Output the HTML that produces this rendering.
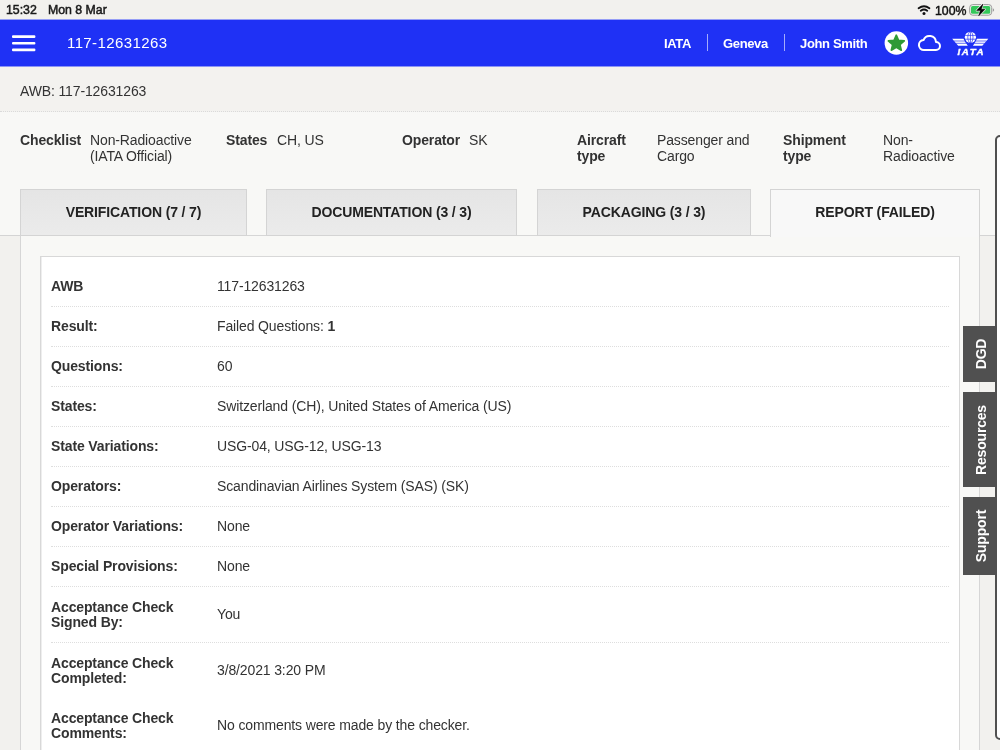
<!DOCTYPE html>
<html><head><meta charset="utf-8">
<style>
*{margin:0;padding:0;box-sizing:border-box}
html,body{width:1000px;height:750px;overflow:hidden;background:#f8f8f6;font-family:"Liberation Sans",sans-serif;color:#333}
.a{position:absolute;white-space:nowrap}
.g{filter:grayscale(1)}
#status{position:absolute;left:0;top:0;width:1000px;height:19px;background:#f2f1ee;color:#1a1a1a;font-size:12.3px;font-weight:normal;-webkit-text-stroke:0.5px #1a1a1a;letter-spacing:0}
#bar{position:absolute;left:0;top:19px;width:1000px;height:48px;background:linear-gradient(to bottom,rgba(31,49,245,.45) 0,rgba(31,49,245,.45) 1px,#1f31f5 1px,#1f31f5 47px,rgba(31,49,245,.5) 47px,rgba(31,49,245,.5) 48px);color:#fff}
.nav{top:17px;font-size:13px;font-weight:bold;letter-spacing:-0.35px}
.hb{position:absolute;left:12px;width:23.5px;height:2.6px;background:#fff;border-radius:1px}
#awbhead .a,#info .a{filter:grayscale(1)}
#awbhead{position:absolute;left:0;top:67px;width:1000px;height:45px;background:#f3f2ef;border-bottom:1px dotted #dadada;font-size:14px;color:#333;letter-spacing:-0.13px}
#info{position:absolute;left:0;top:112px;width:1000px;height:123px;background:#f8f8f6;font-size:14px;color:#333;line-height:16px;letter-spacing:-0.13px}
.lb{font-weight:bold}
.tab{position:absolute;top:189px;height:47px;background:linear-gradient(#e5e5e5,#ebebeb);border:1px solid #d4d4d4;font-size:14px;font-weight:bold;color:#222;text-align:center;line-height:45px;letter-spacing:-0.13px}
#outer{position:absolute;left:0;top:235px;width:1000px;height:515px;background:#f2f1ee;border-top:1px solid #d4d4d4}
#panel{position:absolute;left:20px;top:235px;width:960px;height:515px;background:#f8f8f6;border:1px solid #d6d6d6;border-bottom:none}
#card{position:absolute;left:40px;top:256px;width:920px;height:520px;background:#fff;border:1px solid #d8d8d8;box-shadow:inset 1px 0 0 #eeeeee;padding:10px 10px 0 10px}
.row{display:flex;align-items:center;padding-top:1px;border-bottom:1px dotted #dedede;letter-spacing:-0.13px;height:40px;font-size:14px;line-height:15.5px}
.row.d{height:56px}
.row.d.nb{height:55px}
.row.nb{border-bottom:none}
.row .k{width:166px;font-weight:bold;color:#333;white-space:normal}
.row .v{color:#333}
.stab{position:absolute;left:963px;width:33px;background:#505050;color:#fff;font-size:14px;font-weight:bold;letter-spacing:-0.2px}
.stab span{position:absolute;left:calc(50% + 1px);top:50%;transform:translate(-50%,-50%) rotate(-90deg);white-space:nowrap}
#drawer{position:absolute;left:995px;top:135px;width:12px;height:605px;border:2px solid #505050;border-radius:5px;background:#fff}
</style></head><body>
<div id="status">
  <div class="a g" style="left:6px;top:3.4px">15:32</div>
  <div class="a g" style="left:48px;top:3.4px">Mon 8 Mar</div>
  <div class="a g" style="left:935px;top:3.5px;font-weight:normal;font-size:12.3px;color:#111;-webkit-text-stroke:0.45px #111">100%</div>
  <svg class="a" style="left:0;top:0" width="1000" height="19" viewBox="0 0 1000 19">
    <path d="M918.6,8.2 A9.2,9.2 0 0 1 929.4,8.2" fill="none" stroke="#111" stroke-width="1.9" stroke-linecap="round"/>
    <path d="M920.8,10.7 A5.6,5.6 0 0 1 927.2,10.7" fill="none" stroke="#111" stroke-width="1.9" stroke-linecap="round"/>
    <circle cx="924" cy="13.5" r="1.5" fill="#111"/>
    <rect x="969.7" y="4.6" width="22" height="10.6" rx="3" fill="none" stroke="#9a9a9a" stroke-width="1"/>
    <path d="M992.8,8.3 A2,1.8 0 0 1 992.8,11.7 Z" fill="#9a9a9a"/>
    <rect x="971" y="6" width="19.2" height="7.8" rx="1.6" fill="#34c759"/>
    <path d="M983,4 L976.6,10.6 L980.4,10.6 L978.6,16 L985,9.3 L981.3,9.3 Z" fill="none" stroke="#f2f1ee" stroke-width="1.8" stroke-linejoin="round"/>
    <path d="M983,4 L976.6,10.6 L980.4,10.6 L978.6,16 L985,9.3 L981.3,9.3 Z" fill="#000" stroke="#000" stroke-width="0.5" stroke-linejoin="round"/>
  </svg>
</div>
<div id="bar">
  <svg class="a" style="left:0;top:0" width="50" height="47" viewBox="0 19 50 47"><g fill="#fff"><rect x="12" y="35.3" width="23.4" height="2.7" rx="1"/><rect x="12" y="41.9" width="23.4" height="2.7" rx="1"/><rect x="12" y="48.5" width="23.4" height="2.7" rx="1"/></g></svg>
  <div class="a g" style="left:67px;top:15px;font-size:15px;letter-spacing:0.4px">117-12631263</div>
  <div class="a nav g" style="left:664px">IATA</div>
  <div class="a" style="left:707px;top:15px;width:1px;height:17px;background:rgba(255,255,255,.6)"></div>
  <div class="a nav g" style="left:723px">Geneva</div>
  <div class="a" style="left:784px;top:15px;width:1px;height:17px;background:rgba(255,255,255,.6)"></div>
  <div class="a nav g" style="left:800px">John Smith</div>
  <svg class="a" style="left:876px;top:0" width="124" height="47" viewBox="876 19 124 47">
    <circle cx="896.35" cy="42.95" r="11.75" fill="#fff"/>
    <path transform="translate(0,0.4)" d="M896.3,34.8 L898.6,39.9 L904.3,40.5 L900.0,44.2 L901.3,49.8 L896.3,46.9 L891.3,49.8 L892.6,44.2 L888.3,40.5 L894.0,39.9 Z" fill="#2f9a36" stroke="#2f9a36" stroke-width="1.6" stroke-linejoin="round"/>
    <path d="M924,50 A5,5 0 0 1 923.49,40.02 A6.5,6.5 0 0 1 935.98,42 A4,4 0 0 1 936,50 Z" fill="none" stroke="#fff" stroke-width="2" stroke-linejoin="round"/>
    <circle cx="970.4" cy="37.3" r="5.6" fill="#fff"/>
    <path d="M964.8,35.4 H976 M964.8,39.2 H976 M970.4,31.7 V42.9" stroke="#1f31f5" stroke-width="0.7" fill="none"/>
    <ellipse cx="970.4" cy="37.3" rx="2.6" ry="5.6" fill="none" stroke="#1f31f5" stroke-width="0.7"/>
    <path d="M952.2,38.8 H963.5 Q965,42.5 967.8,45.8 H958.2 Z" fill="#fff"/>
    <path d="M988.3,38.8 H977 Q975.5,42.5 972.9,45.8 H982.3 Z" fill="#fff"/>
    <path d="M954,41 H965 M955.8,43.3 H966.3 M986.5,41 H975.5 M984.7,43.3 H974.2" stroke="#1f31f5" stroke-width="0.7" fill="none"/>
  </svg>
  <div class="a g" style="left:957.4px;top:27.9px;font-size:9.7px;line-height:10px;font-weight:bold;font-style:italic;letter-spacing:1.65px;-webkit-text-stroke:0.4px #fff">IATA</div>
</div>
<div id="awbhead"><div class="a" style="left:20px;top:16px">AWB: 117-12631263</div></div>
<div id="info">
  <div class="a lb" style="left:20px;top:20px">Checklist</div>
  <div class="a" style="left:90px;top:20px">Non-Radioactive<br>(IATA Official)</div>
  <div class="a lb" style="left:226px;top:20px">States</div>
  <div class="a" style="left:277px;top:20px">CH, US</div>
  <div class="a lb" style="left:402px;top:20px">Operator</div>
  <div class="a" style="left:469px;top:20px">SK</div>
  <div class="a lb" style="left:577px;top:20px">Aircraft<br>type</div>
  <div class="a" style="left:657px;top:20px">Passenger and<br>Cargo</div>
  <div class="a lb" style="left:783px;top:20px">Shipment<br>type</div>
  <div class="a" style="left:883px;top:20px">Non-<br>Radioactive</div>
</div>
<div id="outer"></div>
<div id="panel"></div>
<div class="tab g" style="left:20px;width:227px">VERIFICATION (7 / 7)</div>
<div class="tab g" style="left:266px;width:251px">DOCUMENTATION (3 / 3)</div>
<div class="tab g" style="left:537px;width:214px">PACKAGING (3 / 3)</div>
<div class="tab g" style="left:770px;width:210px;background:#f8f8f6;border-bottom:none;height:48px">REPORT (FAILED)</div>
<div id="card" class="g">
  <div class="row"><div class="k">AWB</div><div class="v">117-12631263</div></div>
  <div class="row"><div class="k">Result:</div><div class="v">Failed Questions: <b>1</b></div></div>
  <div class="row"><div class="k">Questions:</div><div class="v">60</div></div>
  <div class="row"><div class="k">States:</div><div class="v">Switzerland (CH), United States of America (US)</div></div>
  <div class="row"><div class="k">State Variations:</div><div class="v">USG-04, USG-12, USG-13</div></div>
  <div class="row"><div class="k">Operators:</div><div class="v">Scandinavian Airlines System (SAS) (SK)</div></div>
  <div class="row"><div class="k">Operator Variations:</div><div class="v">None</div></div>
  <div class="row"><div class="k">Special Provisions:</div><div class="v">None</div></div>
  <div class="row d"><div class="k">Acceptance Check Signed By:</div><div class="v">You</div></div>
  <div class="row d nb"><div class="k">Acceptance Check Completed:</div><div class="v">3/8/2021 3:20 PM</div></div>
  <div class="row d nb"><div class="k">Acceptance Check Comments:</div><div class="v">No comments were made by the checker.</div></div>
</div>
<div id="drawer"></div>
<div class="stab g" style="top:326px;height:56px"><span>DGD</span></div>
<div class="stab g" style="top:392px;height:95px"><span>Resources</span></div>
<div class="stab g" style="top:497px;height:78px"><span>Support</span></div>
</body></html>
